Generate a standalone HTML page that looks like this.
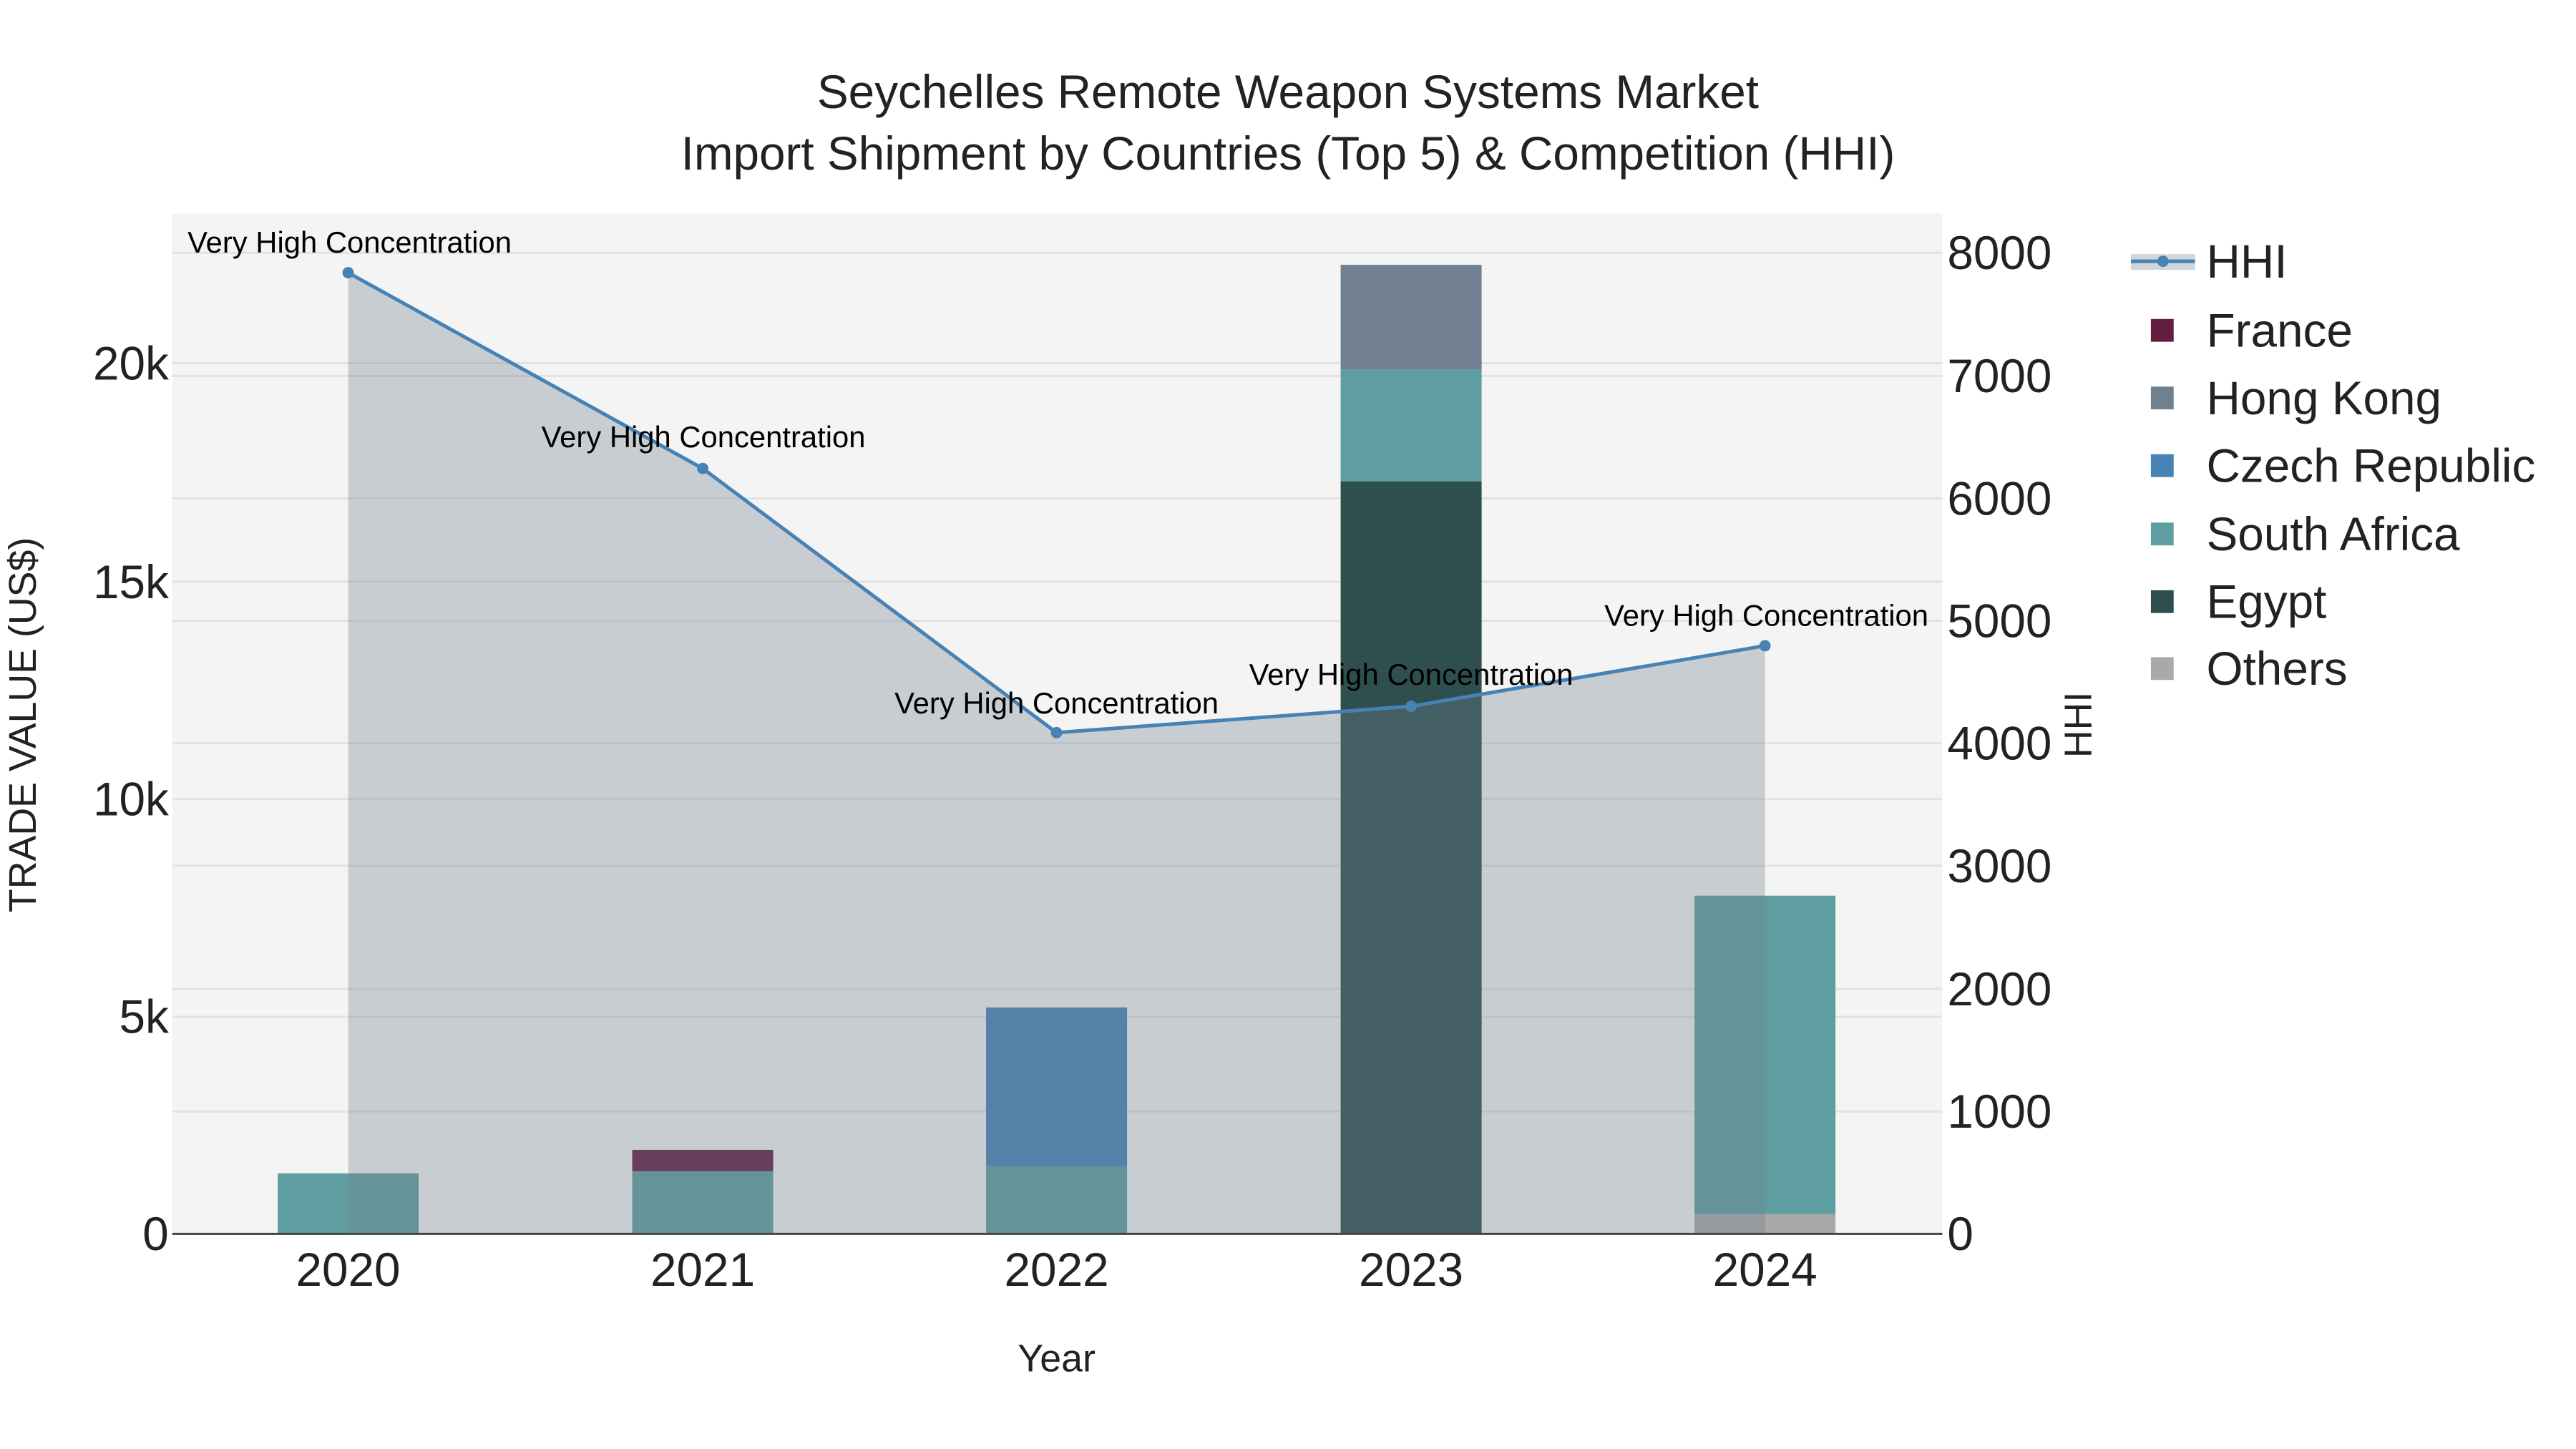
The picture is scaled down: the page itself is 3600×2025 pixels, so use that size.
<!DOCTYPE html>
<html><head><meta charset="utf-8"><style>
html,body{margin:0;padding:0;background:#fff;}
svg{display:block;font-family:"Liberation Sans",Arial,sans-serif;}
</style></head><body>
<svg width="3600" height="2025" viewBox="0 0 3600 2025" xmlns="http://www.w3.org/2000/svg">
<rect width="3600" height="2025" fill="#fff"/>
<g transform="scale(0.995)">
<rect x="242" y="300" width="2486" height="1433" fill="#f4f4f4"/>
<g stroke="#e2e2e2" stroke-width="3">
<line x1="242" x2="2728" y1="1428" y2="1428"/><line x1="242" x2="2728" y1="1122" y2="1122"/>
<line x1="242" x2="2728" y1="817" y2="817"/><line x1="242" x2="2728" y1="510" y2="510"/>
<line x1="242" x2="2728" y1="1561" y2="1561"/><line x1="242" x2="2728" y1="1389" y2="1389"/>
<line x1="242" x2="2728" y1="1216" y2="1216"/><line x1="242" x2="2728" y1="1044" y2="1044"/>
<line x1="242" x2="2728" y1="872" y2="872"/><line x1="242" x2="2728" y1="700" y2="700"/>
<line x1="242" x2="2728" y1="528" y2="528"/><line x1="242" x2="2728" y1="355" y2="355"/>
</g>
<rect x="390" y="1648" width="198" height="85" fill="#5f9ea0"/>
<rect x="888" y="1645" width="198" height="88" fill="#5f9ea0"/>
<rect x="888" y="1615" width="198" height="30" fill="#641e40"/>
<rect x="1385" y="1638" width="198" height="95" fill="#5f9ea0"/>
<rect x="1385" y="1415" width="198" height="223" fill="#4682b4"/>
<rect x="1883" y="676" width="198" height="1057" fill="#2f4f4f"/>
<rect x="1883" y="519" width="198" height="157" fill="#5f9ea0"/>
<rect x="1883" y="372" width="198" height="147" fill="#708090"/>
<rect x="2380" y="1705" width="198" height="28" fill="#a9a9a9"/>
<rect x="2380" y="1258" width="198" height="447" fill="#5f9ea0"/>
<polygon points="489,383 987,658 1484,1029 1982,992 2479,907 2479,1733 489,1733" fill="#708090" fill-opacity="0.33"/>
<line x1="242" x2="2728" y1="1733" y2="1733" stroke="#444" stroke-width="3"/>
<polyline points="489,383 987,658 1484,1029 1982,992 2479,907" fill="none" stroke="#4682b4" stroke-width="5"/>
<g fill="#4682b4">
<circle cx="489" cy="383" r="8"/><circle cx="987" cy="658" r="8"/><circle cx="1484" cy="1029" r="8"/><circle cx="1982" cy="992" r="8"/><circle cx="2479" cy="907" r="8"/>
</g>
<g font-size="42" text-anchor="middle" fill="#000">
<text x="491" y="355">Very High Concentration</text>
<text x="988" y="628">Very High Concentration</text>
<text x="1484" y="1002">Very High Concentration</text>
<text x="1982" y="962">Very High Concentration</text>
<text x="2481" y="879">Very High Concentration</text>
</g>
<g font-size="66" text-anchor="middle" fill="#222">
<text x="1809" y="152">Seychelles Remote Weapon Systems Market</text>
<text x="1809" y="238">Import Shipment by Countries (Top 5) &amp; Competition (HHI)</text>
</g>
<g font-size="66" text-anchor="end" fill="#222">
<text x="237" y="1756">0</text><text x="237" y="1451">5k</text><text x="237" y="1145">10k</text>
<text x="237" y="840">15k</text><text x="237" y="533">20k</text>
</g>
<g font-size="66" text-anchor="start" fill="#222">
<text x="2735" y="1756">0</text><text x="2735" y="1584">1000</text><text x="2735" y="1412">2000</text>
<text x="2735" y="1239">3000</text><text x="2735" y="1067">4000</text><text x="2735" y="895">5000</text>
<text x="2735" y="723">6000</text><text x="2735" y="551">7000</text><text x="2735" y="378">8000</text>
</g>
<g font-size="66" text-anchor="middle" fill="#222">
<text x="489" y="1806">2020</text><text x="987" y="1806">2021</text><text x="1484" y="1806">2022</text>
<text x="1982" y="1806">2023</text><text x="2479" y="1806">2024</text>
</g>
<text x="1484" y="1926" font-size="54" text-anchor="middle" fill="#222">Year</text>
<text transform="translate(50,1018) rotate(-90)" font-size="54" text-anchor="middle" fill="#222">TRADE VALUE (US$)</text>
<text transform="translate(2937,1018) rotate(-90)" font-size="54" text-anchor="middle" fill="#222">HHI</text>
<rect x="2993" y="357" width="90" height="22" fill="#708090" fill-opacity="0.33"/>
<line x1="2993" x2="3083" y1="367" y2="367" stroke="#4682b4" stroke-width="5"/>
<circle cx="3038" cy="367" r="8" fill="#4682b4"/>
<rect x="3021" y="448" width="32" height="32" fill="#641e40"/>
<rect x="3021" y="543" width="32" height="32" fill="#708090"/>
<rect x="3021" y="638" width="32" height="32" fill="#4682b4"/>
<rect x="3021" y="734" width="32" height="32" fill="#5f9ea0"/>
<rect x="3021" y="829" width="32" height="32" fill="#2f4f4f"/>
<rect x="3021" y="923" width="32" height="32" fill="#a9a9a9"/>
<g font-size="66" fill="#222">
<text x="3099" y="390">HHI</text><text x="3099" y="487">France</text><text x="3099" y="582">Hong Kong</text>
<text x="3099" y="677">Czech Republic</text><text x="3099" y="773">South Africa</text><text x="3099" y="868">Egypt</text>
<text x="3099" y="962">Others</text>
</g>
</g>
</svg>
</body></html>
